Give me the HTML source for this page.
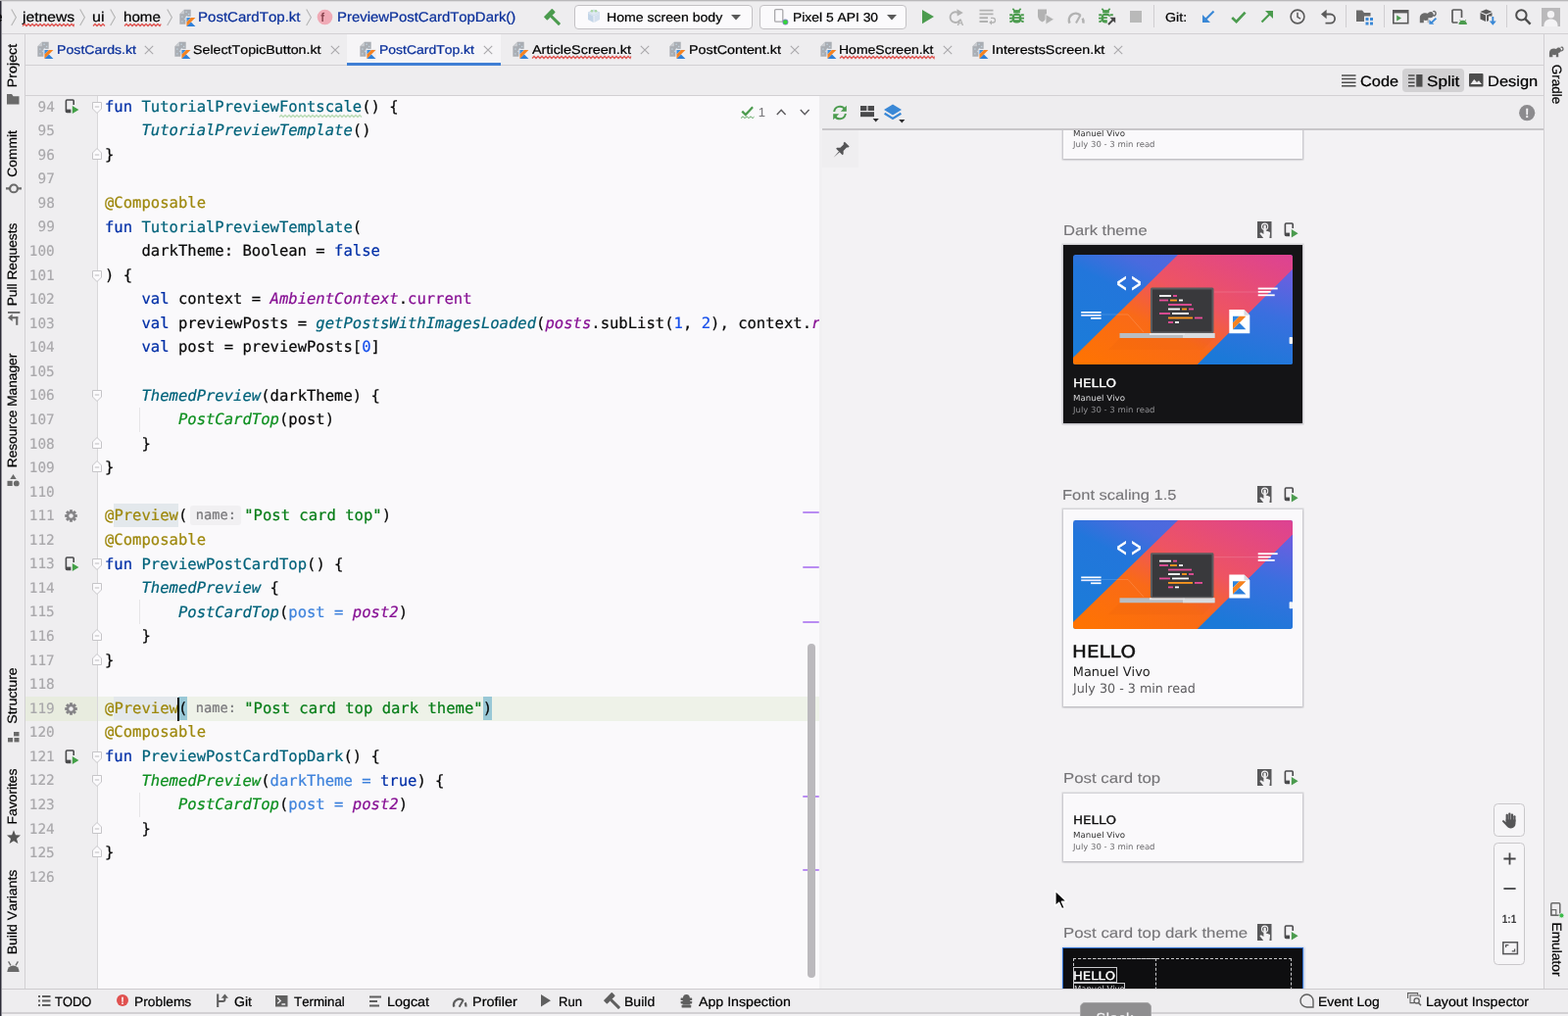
<!DOCTYPE html>
<html lang="en">
<head>
<meta charset="utf-8">
<title>PostCardTop.kt - Android Studio</title>
<style>
html,body{margin:0;padding:0;}
body{width:1600px;height:1037px;overflow:hidden;position:relative;background:#eeedef;
 font-family:"Liberation Sans",Arial,sans-serif;font-size:14px;color:#000;font-kerning:none;
 -webkit-font-smoothing:antialiased;text-rendering:geometricPrecision;}
#root{position:absolute;left:0;top:0;width:1600px;height:1037px;overflow:hidden;will-change:transform;}
.t{position:absolute;white-space:pre;margin:0;padding:0;-webkit-text-stroke:0.22px;}
.b{position:absolute;display:block;overflow:visible;}
.c{position:absolute;white-space:pre;font-family:"DejaVu Sans Mono","Liberation Mono",monospace;font-size:15.55px;line-height:24px;height:24px;color:#080808;left:107px;}
.c{letter-spacing:0.003px;-webkit-text-stroke:0.22px;}
.ln{-webkit-text-stroke:0.15px;}
.c i{font-style:italic;}
.hl{background:#e3e8ec;display:inline-block;height:24px;margin-top:0;vertical-align:top;}
.pm{background:#99c8d6;display:inline-block;height:24px;vertical-align:top;}
.k{color:#002fa7}.f{color:#00627a}.g{color:#0d8f1f}.a{color:#9e880d}.s{color:#067d17}.n{color:#1750eb}.p{color:#871094}.q{color:#3f83dc}
.ln{position:absolute;white-space:pre;font-family:"DejaVu Sans Mono","Liberation Mono",monospace;font-size:14.4px;line-height:24px;height:24px;color:#a9a8ab;width:40px;text-align:right;left:15.8px;}
.h{display:inline-block;font-family:"DejaVu Sans Mono","Liberation Mono",monospace;font-size:13.7px;letter-spacing:0;color:#7b7a7d;background:#f1f0f2;border-radius:3px;vertical-align:top;height:20px;line-height:21.5px;margin-top:2px;}
</style>
</head>
<body>
<div id="root">
<div class="b" style="left:26px;top:98px;width:810px;height:912px;background:#faf9fb;"></div>
<div class="b" style="left:26px;top:98px;width:73px;height:912px;background:#efeef0;"></div>
<div class="b" style="left:99px;top:98px;width:1px;height:912px;background:#d9d8da;"></div>
<div class="b" style="left:839px;top:98px;width:737px;height:912px;background:#f3f2f4;"></div>
<div class="b" style="left:836px;top:98px;width:3px;height:912px;background:#f1f0f2;"></div>
<div class="b" style="left:0px;top:0px;width:1600px;height:1px;background:#b9b8ba;"></div>
<div class="b" style="left:0px;top:1px;width:1600px;height:1px;background:#dddcde;"></div>
<div class="b" style="left:0px;top:34px;width:1600px;height:1px;background:#d2d0d3;"></div>
<div class="b" style="left:26px;top:66px;width:1550px;height:1px;background:#d2d0d3;"></div>
<div class="b" style="left:26px;top:97px;width:1550px;height:1px;background:#d2d0d3;"></div>
<div class="b" style="left:25px;top:35px;width:1px;height:975px;background:#d2d0d3;"></div>
<div class="b" style="left:0px;top:1px;width:1px;height:1036px;background:#2c2b36;"></div>
<div class="b" style="left:1px;top:1px;width:1px;height:1036px;background:#8b8a92;"></div>
<div class="b" style="left:1575px;top:35px;width:1px;height:975px;background:#d2d0d3;"></div>
<div class="b" style="left:0;top:-0.7px;width:1600px;height:36px;">
<div class="t" style="top:9.1px;font-size:14px;line-height:18px;color:#000;left:-5.3px;">e</div>
<svg class="b" style="left:10.5px;top:10.099999999999998px;" width="6" height="18" viewBox="0 0 6 18"><polyline points="0.7,0.6 5.4,8.8 0.7,17" fill="none" stroke="#b4b4b4" stroke-width="1.1"/></svg>
<div class="t" style="top:9.1px;font-size:14px;line-height:18px;color:#000;left:22.5px;transform:scaleX(1.120);transform-origin:0 0;">jetnews</div>
<svg class="b" style="left:23px;top:25.1px;" width="53" height="3" viewBox="0 0 53 3"><path d="M0,2.5 L2.0,0.5 L4.0,2.5 L6.0,0.5 L8.0,2.5 L10.0,0.5 L12.0,2.5 L14.0,0.5 L16.0,2.5 L18.0,0.5 L20.0,2.5 L22.0,0.5 L24.0,2.5 L26.0,0.5 L28.0,2.5 L30.0,0.5 L32.0,2.5 L34.0,0.5 L36.0,2.5 L38.0,0.5 L40.0,2.5 L42.0,0.5 L44.0,2.5 L46.0,0.5 L48.0,2.5 L50.0,0.5 L52.0,2.5 L52.5,0.5" stroke="#e0524f" stroke-width="1.25" fill="none"/></svg>
<svg class="b" style="left:81px;top:10.099999999999998px;" width="6" height="18" viewBox="0 0 6 18"><polyline points="0.7,0.6 5.4,8.8 0.7,17" fill="none" stroke="#b4b4b4" stroke-width="1.1"/></svg>
<div class="t" style="top:9.1px;font-size:14px;line-height:18px;color:#000;left:94.4px;transform:scaleX(1.150);transform-origin:0 0;">ui</div>
<svg class="b" style="left:95px;top:25.1px;" width="13" height="3" viewBox="0 0 13 3"><path d="M0,2.5 L2.0,0.5 L4.0,2.5 L6.0,0.5 L8.0,2.5 L10.0,0.5 L12.0,2.5" stroke="#e0524f" stroke-width="1.25" fill="none"/></svg>
<svg class="b" style="left:112px;top:10.099999999999998px;" width="6" height="18" viewBox="0 0 6 18"><polyline points="0.7,0.6 5.4,8.8 0.7,17" fill="none" stroke="#b4b4b4" stroke-width="1.1"/></svg>
<div class="t" style="top:9.1px;font-size:14px;line-height:18px;color:#000;left:125.9px;transform:scaleX(1.083);transform-origin:0 0;">home</div>
<svg class="b" style="left:126.5px;top:25.1px;" width="38" height="3" viewBox="0 0 38 3"><path d="M0,2.5 L2.0,0.5 L4.0,2.5 L6.0,0.5 L8.0,2.5 L10.0,0.5 L12.0,2.5 L14.0,0.5 L16.0,2.5 L18.0,0.5 L20.0,2.5 L22.0,0.5 L24.0,2.5 L26.0,0.5 L28.0,2.5 L30.0,0.5 L32.0,2.5 L34.0,0.5 L36.0,2.5 L37.3,0.5" stroke="#e0524f" stroke-width="1.25" fill="none"/></svg>
<svg class="b" style="left:170px;top:10.099999999999998px;" width="6" height="18" viewBox="0 0 6 18"><polyline points="0.7,0.6 5.4,8.8 0.7,17" fill="none" stroke="#b4b4b4" stroke-width="1.1"/></svg>
<svg class="b" style="left:183.3px;top:10px;" width="17" height="19" viewBox="0 0 16 18"><path d="M0.3,5 L4.6,0.6 H11 V15 H0.3 Z" fill="#a9adb3"/><path d="M0.3,5 H4.6 V0.6 Z" fill="#c9ccd0"/><g fill="#c3d3e0"><rect x="6" y="2.4" width="1.3" height="1.3"/><rect x="8.4" y="4.6" width="1.3" height="1.3"/><rect x="2" y="7" width="1.3" height="1.3"/><rect x="4.6" y="9.2" width="1.3" height="1.3"/><rect x="2" y="11.6" width="1.3" height="1.3"/><rect x="6.4" y="6.6" width="1.3" height="1.3"/></g><g transform="translate(7,8.5)"><rect x="-1" y="-1" width="10" height="10" fill="#efeef0"/><polygon points="0,0 4.2,0 0,4.2" fill="#3d8fe0"/><polygon points="4.2,0 8.5,0 0,8.5 0,4.2" fill="#f58220"/><polygon points="4.25,4.25 8.5,8.5 0,8.5" fill="#2e7fd8"/></g></svg>
<div class="t" style="top:9.1px;font-size:14px;line-height:18px;color:#0a2f9a;left:201.9px;transform:scaleX(1.075);transform-origin:0 0;">PostCardTop.kt</div>
<svg class="b" style="left:311.5px;top:10.099999999999998px;" width="6" height="18" viewBox="0 0 6 18"><polyline points="0.7,0.6 5.4,8.8 0.7,17" fill="none" stroke="#b4b4b4" stroke-width="1.1"/></svg>
<svg class="b" style="left:322.5px;top:9.5px;" width="17" height="17" viewBox="0 0 17 17"><circle cx="8.5" cy="8.5" r="7.8" fill="#f0aab6"/></svg>
<div class="t" style="top:10.9px;font-size:12.5px;line-height:16px;color:#7a3540;left:327.6px;">f</div>
<div class="t" style="top:9.1px;font-size:14px;line-height:18px;color:#0a2f9a;left:344.1px;transform:scaleX(1.065);transform-origin:0 0;">PreviewPostCardTopDark()</div>
<svg class="b" style="left:554.5px;top:9.6px;" width="18" height="18" viewBox="0 0 18 18"><g transform="rotate(-45 9 9)" fill="#4b9b4e"><rect x="3" y="2" width="12" height="5" rx="0.8"/><rect x="7.5" y="6.6" width="3" height="12.4" rx="0.6"/></g></svg>
<div class="b" style="left:586px;top:5.7px;width:182px;height:25.0px;background:#fbfafc;border:1px solid #c3c1c4;border-radius:4px;box-sizing:border-box;"></div>
<svg class="b" style="left:598.5px;top:10px;" width="14" height="15" viewBox="0 0 14 15"><polygon points="7,1 13,4 7,7 1,4" fill="#dfe9f3" stroke="#bcd0e4" stroke-width="0.6"/><polygon points="1,4.6 6.6,7.6 6.6,14 1,11" fill="#c3d5e8"/><polygon points="13,4.6 7.4,7.6 7.4,14 13,11" fill="#d3e0ee"/><circle cx="5" cy="2.2" r="1.3" fill="#a9d6a6"/><circle cx="9" cy="2.2" r="1.3" fill="#a9d6a6"/></svg>
<div class="t" style="top:9.4px;font-size:12.8px;line-height:17px;color:#000;left:618.8px;transform:scaleX(1.101);transform-origin:0 0;">Home screen body</div>
<svg class="b" style="left:746px;top:15.5px;" width="10" height="6" viewBox="0 0 10 6"><polygon points="0,0 10,0 5,5.6" fill="#595959"/></svg>
<div class="b" style="left:775px;top:5.7px;width:150px;height:25.0px;background:#fbfafc;border:1px solid #c3c1c4;border-radius:4px;box-sizing:border-box;"></div>
<svg class="b" style="left:787px;top:9px;" width="18" height="18" viewBox="0 0 18 18"><rect x="3.6" y="1.6" width="8.2" height="12.6" rx="1.2" fill="none" stroke="#a9a8ab" stroke-width="1.3"/><circle cx="14.4" cy="14.6" r="3" fill="#8b7fd0"/><circle cx="14.4" cy="14.6" r="2.3" fill="#35d43a"/></svg>
<div class="t" style="top:9.4px;font-size:12.8px;line-height:17px;color:#000;left:808.7px;transform:scaleX(1.083);transform-origin:0 0;">Pixel 5 API 30</div>
<svg class="b" style="left:904.8px;top:15.5px;" width="10" height="6" viewBox="0 0 10 6"><polygon points="0,0 10,0 5,5.6" fill="#595959"/></svg>
<svg class="b" style="left:940.5px;top:10.5px;" width="12" height="14.2" viewBox="0 0 12 14.2"><polygon points="0,0 12,7.1 0,14.2" fill="#4b9b4e"/></svg>
<svg class="b" style="left:968px;top:9.5px;" width="16" height="17" viewBox="0 0 16 17"><path d="M10.6,4.6 A5.4,5.4 0 1 0 11.6,11.4" fill="none" stroke="#b2b2b2" stroke-width="1.9"/><polygon points="8.4,0.2 14.8,4 8.8,7.6" fill="#b2b2b2"/><text x="12" y="16.6" text-anchor="middle" font-family="Liberation Sans, Arial, sans-serif" font-size="9.5" font-weight="700" fill="#b2b2b2">A</text></svg>
<svg class="b" style="left:999px;top:9.5px;" width="17" height="17" viewBox="0 0 17 17"><path d="M0.5,1.6 H14.5 M0.5,5.4 H14.5 M0.5,9.2 H9 M0.5,13 H9" stroke="#b2b2b2" stroke-width="1.9" fill="none"/><path d="M12,9.4 H14.2 A2.3,2.3 0 0 1 14.2,14 H12.6" fill="none" stroke="#b2b2b2" stroke-width="1.3"/><polygon points="13,11.6 13,16.4 10.2,14" fill="#b2b2b2"/></svg>
<svg class="b" style="left:1029.5px;top:8.5px;" width="18" height="18" viewBox="0 0 18 18"><path d="M3.4,0.8 L5.8,3.6 M11.6,0.8 L9.2,3.6" stroke="#4b9b4e" stroke-width="1.7" fill="none"/><path d="M4,5.2 A3.5,3.2 0 0 1 11,5.2 Z" fill="#4b9b4e"/><rect x="2.7" y="5.6" width="9.6" height="10" rx="4.2" fill="#4b9b4e"/><path d="M0.2,7.2 H3.4 M11.6,7.2 H14.8 M0,10.6 H3 M12,10.6 H15 M0.4,14.4 L3.4,13.2 M14.6,14.4 L11.6,13.2" stroke="#4b9b4e" stroke-width="1.9" fill="none"/><path d="M5.2,8.7 H9.8 M5.2,11.6 H9.8" stroke="#eeedef" stroke-width="1.3"/></svg>
<svg class="b" style="left:1058px;top:8.5px;" width="18" height="18" viewBox="0 0 18 18"><path d="M1,1.5 H10 V8 C10,11.5 7.5,13.5 5.5,14.5 C3.5,13.5 1,11.5 1,8 Z" fill="#b2b2b2"/><polygon points="9,6.5 17.5,11.7 9,17" fill="#b2b2b2" stroke="#eeedef" stroke-width="0.8"/></svg>
<svg class="b" style="left:1089.5px;top:10.5px;" width="17" height="15" viewBox="0 0 17 15"><path d="M1.6,13.6 A6.8,6.8 0 0 1 12.4,5.6" fill="none" stroke="#b2b2b2" stroke-width="2.5"/><path d="M14.6,8.6 A6.8,6.8 0 0 1 15.3,13.6" fill="none" stroke="#b2b2b2" stroke-width="2.5"/><path d="M8,13.4 L12.6,5.2" stroke="#b2b2b2" stroke-width="2.1" fill="none"/></svg>
<svg class="b" style="left:1121px;top:8.5px;" width="18" height="18" viewBox="0 0 18 18"><path d="M3.4,0.8 L5.8,3.6 M11.6,0.8 L9.2,3.6" stroke="#4b9b4e" stroke-width="1.7" fill="none"/><path d="M4,5.2 A3.5,3.2 0 0 1 11,5.2 Z" fill="#4b9b4e"/><rect x="2.7" y="5.6" width="9.6" height="10" rx="4.2" fill="#4b9b4e"/><path d="M0.2,7.2 H3.4 M11.6,7.2 H14.8 M0,10.6 H3 M12,10.6 H15 M0.4,14.4 L3.4,13.2 M14.6,14.4 L11.6,13.2" stroke="#4b9b4e" stroke-width="1.9" fill="none"/><path d="M5.2,8.7 H9.8 M5.2,11.6 H9.8" stroke="#eeedef" stroke-width="1.3"/><rect x="8.8" y="8.6" width="9" height="9" fill="#eeedef"/><path d="M10,17 L15.6,11.4" stroke="#454545" stroke-width="2" fill="none"/><polygon points="11.4,9.8 17.2,9.8 17.2,15.6" fill="#454545"/></svg>
<svg class="b" style="left:1152.7px;top:11.8px;" width="12" height="12" viewBox="0 0 12 12"><rect x="0" y="0" width="12" height="12" fill="#b9b9b9"/></svg>
<div class="b" style="left:1177px;top:6px;width:1px;height:23px;background:#d0ced1;"></div>
<div class="t" style="top:9.4px;font-size:12.8px;line-height:17px;color:#000;left:1188.7px;transform:scaleX(1.111);transform-origin:0 0;">Git:</div>
<svg class="b" style="left:1226px;top:11px;" width="14" height="14" viewBox="0 0 14 14"><path d="M12.5,1.5 L3,11" stroke="#3a88d6" stroke-width="2.1" fill="none"/><polygon points="1,5 1,13 9,13" fill="#3a88d6"/></svg>
<svg class="b" style="left:1255.5px;top:11.5px;" width="16" height="13" viewBox="0 0 16 13"><path d="M1.2,7 L5.6,11.2 L14.6,1.6" stroke="#4b9b4e" stroke-width="2.6" fill="none"/></svg>
<svg class="b" style="left:1286.3px;top:11px;" width="14" height="14" viewBox="0 0 14 14"><path d="M1.5,12.5 L11,3" stroke="#4b9b4e" stroke-width="2.1" fill="none"/><polygon points="5,1 13,1 13,9" fill="#4b9b4e"/></svg>
<svg class="b" style="left:1315.5px;top:9.5px;" width="16" height="16" viewBox="0 0 16 16"><circle cx="8" cy="8" r="6.9" fill="none" stroke="#5a5a5a" stroke-width="1.6"/><path d="M8,3.8 V8.4 L11,10.2" fill="none" stroke="#5a5a5a" stroke-width="1.5"/></svg>
<svg class="b" style="left:1347.5px;top:9.5px;" width="15" height="16" viewBox="0 0 15 16"><path d="M3,5.5 H9.5 A4.6,4.6 0 0 1 9.5,14.7 H4.5" fill="none" stroke="#5a5a5a" stroke-width="1.8"/><polygon points="0,5.5 5.6,0.8 5.6,10.2" fill="#5a5a5a"/></svg>
<div class="b" style="left:1373px;top:6px;width:1px;height:23px;background:#d0ced1;"></div>
<svg class="b" style="left:1384.3px;top:9.5px;" width="18" height="18" viewBox="0 0 18 18"><path d="M0,1.5 H6 L8,4 H14.5 V13 H0 Z" fill="#6a6a6a"/><rect x="8" y="7.5" width="9.5" height="9.5" fill="#eeedef"/><rect x="9.5" y="9" width="3" height="3" fill="#3a88d6"/><rect x="14" y="9" width="3" height="3" fill="#3a88d6"/><rect x="9.5" y="13.5" width="3" height="3" fill="#3a88d6"/><rect x="14" y="13.5" width="3" height="3" fill="#3a88d6"/></svg>
<div class="b" style="left:1411.5px;top:6px;width:1.0px;height:23px;background:#d0ced1;"></div>
<svg class="b" style="left:1420.5px;top:10.5px;" width="17" height="15" viewBox="0 0 17 15"><rect x="0.8" y="0.8" width="14.9" height="12.9" fill="none" stroke="#5a5a5a" stroke-width="1.6"/><rect x="0.8" y="0.8" width="14.9" height="2.6" fill="#5a5a5a"/><polygon points="4.2,5.6 9,8.6 4.2,11.6" fill="#4b9b4e"/></svg>
<svg class="b" style="left:1448.3px;top:10.5px;" width="18" height="15" viewBox="0 0 18 14.5"><path d="M0.8,13 V8 C0.8,4.6 3.4,3 6.4,3 C7.6,3 8.4,3.2 9,3.6 C9.8,2 11.6,1.2 13.2,2 C14.6,2.8 15,4.4 14.6,5.6 C14.2,7.4 12.8,8.2 11.6,8.2 V13 H8.8 V10.2 C7.6,10.8 6,10.8 4.8,10.2 V13 Z" fill="#6a6a6a"/><path d="M14,5 C15.4,6.6 17.6,5 17,2.8 C16.6,1.4 15.2,0.8 14.4,1.8" fill="none" stroke="#6a6a6a" stroke-width="1.5"/><rect x="9.4" y="8" width="9" height="7" fill="#eeedef"/><path d="M17.4,8.4 L12.2,13.4" stroke="#3a88d6" stroke-width="1.9" fill="none"/><polygon points="10.4,9.8 10.4,14.6 15.4,14.6" fill="#3a88d6"/></svg>
<svg class="b" style="left:1480.5px;top:9.5px;" width="17" height="17" viewBox="0 0 17 17"><rect x="1" y="1" width="9.5" height="13" rx="1" fill="none" stroke="#5a5a5a" stroke-width="1.7"/><rect x="6.5" y="9" width="10" height="8" fill="#eeedef"/><path d="M7.5,16 A4.2,4.2 0 0 1 15.9,16 Z" fill="#4b9b4e"/><path d="M8.6,11.2 L9.8,12.8 M14.8,11.2 L13.6,12.8" stroke="#4b9b4e" stroke-width="0.9"/></svg>
<svg class="b" style="left:1509.5px;top:9.5px;" width="17" height="17" viewBox="0 0 17 17"><polygon points="6.5,0.5 12.5,3 6.5,5.6 0.5,3" fill="#5a5a5a"/><polygon points="0.5,4 6,6.4 6,13 0.5,10.4" fill="#5a5a5a"/><polygon points="12.5,4 7,6.4 7,13 12.5,10.4" fill="#5a5a5a"/><rect x="9" y="7.5" width="8" height="10" fill="#eeedef"/><path d="M13.3,8 V14.5" stroke="#3a88d6" stroke-width="1.9"/><polygon points="9.8,12.6 16.8,12.6 13.3,16.8" fill="#3a88d6"/></svg>
<div class="b" style="left:1537px;top:6px;width:1px;height:23px;background:#d0ced1;"></div>
<svg class="b" style="left:1546px;top:9.5px;" width="17" height="17" viewBox="0 0 17 17"><circle cx="6.4" cy="6.4" r="5.2" fill="none" stroke="#4d4d4d" stroke-width="2"/><path d="M10.2,10.2 L15.6,15.6" stroke="#4d4d4d" stroke-width="2.4"/></svg>
<svg class="b" style="left:1573px;top:8.8px;" width="19" height="19" viewBox="0 0 19 19"><rect x="0" y="0" width="19" height="19" fill="#bab9bb"/><circle cx="9.5" cy="6.8" r="3.7" fill="#f4f3f5"/><path d="M2.4,19 C2.4,13.6 5.4,11.6 9.5,11.6 C13.6,11.6 16.6,13.6 16.6,19 Z" fill="#f4f3f5"/></svg>
</div>
<div class="b" style="left:354px;top:35px;width:157px;height:31px;background:#f6f5f7;"></div>
<div class="b" style="left:354px;top:63.5px;width:157px;height:3.0px;background:#3f7fd4;"></div>
<svg class="b" style="left:38.300000000000004px;top:42px;" width="17" height="19" viewBox="0 0 16 18"><path d="M0.3,5 L4.6,0.6 H11 V15 H0.3 Z" fill="#a9adb3"/><path d="M0.3,5 H4.6 V0.6 Z" fill="#c9ccd0"/><g fill="#c3d3e0"><rect x="6" y="2.4" width="1.3" height="1.3"/><rect x="8.4" y="4.6" width="1.3" height="1.3"/><rect x="2" y="7" width="1.3" height="1.3"/><rect x="4.6" y="9.2" width="1.3" height="1.3"/><rect x="2" y="11.6" width="1.3" height="1.3"/><rect x="6.4" y="6.6" width="1.3" height="1.3"/></g><g transform="translate(7,8.5)"><rect x="-1" y="-1" width="10" height="10" fill="#efeef0"/><polygon points="0,0 4.2,0 0,4.2" fill="#3d8fe0"/><polygon points="4.2,0 8.5,0 0,8.5 0,4.2" fill="#f58220"/><polygon points="4.25,4.25 8.5,8.5 0,8.5" fill="#2e7fd8"/></g></svg>
<div class="t" style="top:43.1px;font-size:12.6px;line-height:16px;color:#0a2f9a;left:58.1px;transform:scaleX(1.124);transform-origin:0 0;">PostCards.kt</div>
<svg class="b" style="left:147.3px;top:45.9px;" width="10" height="10" viewBox="0 0 10 10"><path d="M0.8,0.8 L9.2,9.2 M9.2,0.8 L0.8,9.2" stroke="#a9a8ab" stroke-width="1.1" fill="none"/></svg>
<svg class="b" style="left:177.5px;top:42px;" width="17" height="19" viewBox="0 0 16 18"><path d="M0.3,5 L4.6,0.6 H11 V15 H0.3 Z" fill="#a9adb3"/><path d="M0.3,5 H4.6 V0.6 Z" fill="#c9ccd0"/><g fill="#c3d3e0"><rect x="6" y="2.4" width="1.3" height="1.3"/><rect x="8.4" y="4.6" width="1.3" height="1.3"/><rect x="2" y="7" width="1.3" height="1.3"/><rect x="4.6" y="9.2" width="1.3" height="1.3"/><rect x="2" y="11.6" width="1.3" height="1.3"/><rect x="6.4" y="6.6" width="1.3" height="1.3"/></g><g transform="translate(7,8.5)"><rect x="-1" y="-1" width="10" height="10" fill="#efeef0"/><polygon points="0,0 4.2,0 0,4.2" fill="#3d8fe0"/><polygon points="4.2,0 8.5,0 0,8.5 0,4.2" fill="#f58220"/><polygon points="4.25,4.25 8.5,8.5 0,8.5" fill="#2e7fd8"/></g></svg>
<div class="t" style="top:43.1px;font-size:12.6px;line-height:16px;color:#000;left:197.1px;transform:scaleX(1.130);transform-origin:0 0;">SelectTopicButton.kt</div>
<svg class="b" style="left:337px;top:45.9px;" width="10" height="10" viewBox="0 0 10 10"><path d="M0.8,0.8 L9.2,9.2 M9.2,0.8 L0.8,9.2" stroke="#a9a8ab" stroke-width="1.1" fill="none"/></svg>
<svg class="b" style="left:367.2px;top:42px;" width="17" height="19" viewBox="0 0 16 18"><path d="M0.3,5 L4.6,0.6 H11 V15 H0.3 Z" fill="#a9adb3"/><path d="M0.3,5 H4.6 V0.6 Z" fill="#c9ccd0"/><g fill="#c3d3e0"><rect x="6" y="2.4" width="1.3" height="1.3"/><rect x="8.4" y="4.6" width="1.3" height="1.3"/><rect x="2" y="7" width="1.3" height="1.3"/><rect x="4.6" y="9.2" width="1.3" height="1.3"/><rect x="2" y="11.6" width="1.3" height="1.3"/><rect x="6.4" y="6.6" width="1.3" height="1.3"/></g><g transform="translate(7,8.5)"><rect x="-1" y="-1" width="10" height="10" fill="#efeef0"/><polygon points="0,0 4.2,0 0,4.2" fill="#3d8fe0"/><polygon points="4.2,0 8.5,0 0,8.5 0,4.2" fill="#f58220"/><polygon points="4.25,4.25 8.5,8.5 0,8.5" fill="#2e7fd8"/></g></svg>
<div class="t" style="top:43.1px;font-size:12.6px;line-height:16px;color:#0a2f9a;left:386.7px;transform:scaleX(1.108);transform-origin:0 0;">PostCardTop.kt</div>
<svg class="b" style="left:492.8px;top:45.9px;" width="10" height="10" viewBox="0 0 10 10"><path d="M0.8,0.8 L9.2,9.2 M9.2,0.8 L0.8,9.2" stroke="#a9a8ab" stroke-width="1.1" fill="none"/></svg>
<svg class="b" style="left:522.5px;top:42px;" width="17" height="19" viewBox="0 0 16 18"><path d="M0.3,5 L4.6,0.6 H11 V15 H0.3 Z" fill="#a9adb3"/><path d="M0.3,5 H4.6 V0.6 Z" fill="#c9ccd0"/><g fill="#c3d3e0"><rect x="6" y="2.4" width="1.3" height="1.3"/><rect x="8.4" y="4.6" width="1.3" height="1.3"/><rect x="2" y="7" width="1.3" height="1.3"/><rect x="4.6" y="9.2" width="1.3" height="1.3"/><rect x="2" y="11.6" width="1.3" height="1.3"/><rect x="6.4" y="6.6" width="1.3" height="1.3"/></g><g transform="translate(7,8.5)"><rect x="-1" y="-1" width="10" height="10" fill="#efeef0"/><polygon points="0,0 4.2,0 0,4.2" fill="#3d8fe0"/><polygon points="4.2,0 8.5,0 0,8.5 0,4.2" fill="#f58220"/><polygon points="4.25,4.25 8.5,8.5 0,8.5" fill="#2e7fd8"/></g></svg>
<div class="t" style="top:43.1px;font-size:12.6px;line-height:16px;color:#000;left:542.6px;transform:scaleX(1.145);transform-origin:0 0;">ArticleScreen.kt</div>
<svg class="b" style="left:543.0px;top:56.8px;" width="101" height="3" viewBox="0 0 101 3"><path d="M0,2.5 L2.0,0.5 L4.0,2.5 L6.0,0.5 L8.0,2.5 L10.0,0.5 L12.0,2.5 L14.0,0.5 L16.0,2.5 L18.0,0.5 L20.0,2.5 L22.0,0.5 L24.0,2.5 L26.0,0.5 L28.0,2.5 L30.0,0.5 L32.0,2.5 L34.0,0.5 L36.0,2.5 L38.0,0.5 L40.0,2.5 L42.0,0.5 L44.0,2.5 L46.0,0.5 L48.0,2.5 L50.0,0.5 L52.0,2.5 L54.0,0.5 L56.0,2.5 L58.0,0.5 L60.0,2.5 L62.0,0.5 L64.0,2.5 L66.0,0.5 L68.0,2.5 L70.0,0.5 L72.0,2.5 L74.0,0.5 L76.0,2.5 L78.0,0.5 L80.0,2.5 L82.0,0.5 L84.0,2.5 L86.0,0.5 L88.0,2.5 L90.0,0.5 L92.0,2.5 L94.0,0.5 L96.0,2.5 L98.0,0.5 L100.0,2.5 L100.8,0.5" stroke="#e0524f" stroke-width="1.25" fill="none"/></svg>
<svg class="b" style="left:652.6px;top:45.9px;" width="10" height="10" viewBox="0 0 10 10"><path d="M0.8,0.8 L9.2,9.2 M9.2,0.8 L0.8,9.2" stroke="#a9a8ab" stroke-width="1.1" fill="none"/></svg>
<svg class="b" style="left:683.0px;top:42px;" width="17" height="19" viewBox="0 0 16 18"><path d="M0.3,5 L4.6,0.6 H11 V15 H0.3 Z" fill="#a9adb3"/><path d="M0.3,5 H4.6 V0.6 Z" fill="#c9ccd0"/><g fill="#c3d3e0"><rect x="6" y="2.4" width="1.3" height="1.3"/><rect x="8.4" y="4.6" width="1.3" height="1.3"/><rect x="2" y="7" width="1.3" height="1.3"/><rect x="4.6" y="9.2" width="1.3" height="1.3"/><rect x="2" y="11.6" width="1.3" height="1.3"/><rect x="6.4" y="6.6" width="1.3" height="1.3"/></g><g transform="translate(7,8.5)"><rect x="-1" y="-1" width="10" height="10" fill="#efeef0"/><polygon points="0,0 4.2,0 0,4.2" fill="#3d8fe0"/><polygon points="4.2,0 8.5,0 0,8.5 0,4.2" fill="#f58220"/><polygon points="4.25,4.25 8.5,8.5 0,8.5" fill="#2e7fd8"/></g></svg>
<div class="t" style="top:43.1px;font-size:12.6px;line-height:16px;color:#000;left:703.1px;transform:scaleX(1.137);transform-origin:0 0;">PostContent.kt</div>
<svg class="b" style="left:805.9px;top:45.9px;" width="10" height="10" viewBox="0 0 10 10"><path d="M0.8,0.8 L9.2,9.2 M9.2,0.8 L0.8,9.2" stroke="#a9a8ab" stroke-width="1.1" fill="none"/></svg>
<svg class="b" style="left:836.5px;top:42px;" width="17" height="19" viewBox="0 0 16 18"><path d="M0.3,5 L4.6,0.6 H11 V15 H0.3 Z" fill="#a9adb3"/><path d="M0.3,5 H4.6 V0.6 Z" fill="#c9ccd0"/><g fill="#c3d3e0"><rect x="6" y="2.4" width="1.3" height="1.3"/><rect x="8.4" y="4.6" width="1.3" height="1.3"/><rect x="2" y="7" width="1.3" height="1.3"/><rect x="4.6" y="9.2" width="1.3" height="1.3"/><rect x="2" y="11.6" width="1.3" height="1.3"/><rect x="6.4" y="6.6" width="1.3" height="1.3"/></g><g transform="translate(7,8.5)"><rect x="-1" y="-1" width="10" height="10" fill="#efeef0"/><polygon points="0,0 4.2,0 0,4.2" fill="#3d8fe0"/><polygon points="4.2,0 8.5,0 0,8.5 0,4.2" fill="#f58220"/><polygon points="4.25,4.25 8.5,8.5 0,8.5" fill="#2e7fd8"/></g></svg>
<div class="t" style="top:43.1px;font-size:12.6px;line-height:16px;color:#000;left:856.4px;transform:scaleX(1.112);transform-origin:0 0;">HomeScreen.kt</div>
<svg class="b" style="left:856.7px;top:56.8px;" width="97" height="3" viewBox="0 0 97 3"><path d="M0,2.5 L2.0,0.5 L4.0,2.5 L6.0,0.5 L8.0,2.5 L10.0,0.5 L12.0,2.5 L14.0,0.5 L16.0,2.5 L18.0,0.5 L20.0,2.5 L22.0,0.5 L24.0,2.5 L26.0,0.5 L28.0,2.5 L30.0,0.5 L32.0,2.5 L34.0,0.5 L36.0,2.5 L38.0,0.5 L40.0,2.5 L42.0,0.5 L44.0,2.5 L46.0,0.5 L48.0,2.5 L50.0,0.5 L52.0,2.5 L54.0,0.5 L56.0,2.5 L58.0,0.5 L60.0,2.5 L62.0,0.5 L64.0,2.5 L66.0,0.5 L68.0,2.5 L70.0,0.5 L72.0,2.5 L74.0,0.5 L76.0,2.5 L78.0,0.5 L80.0,2.5 L82.0,0.5 L84.0,2.5 L86.0,0.5 L88.0,2.5 L90.0,0.5 L92.0,2.5 L94.0,0.5 L96.0,2.5 L96.3,0.5" stroke="#e0524f" stroke-width="1.25" fill="none"/></svg>
<svg class="b" style="left:961.8px;top:45.9px;" width="10" height="10" viewBox="0 0 10 10"><path d="M0.8,0.8 L9.2,9.2 M9.2,0.8 L0.8,9.2" stroke="#a9a8ab" stroke-width="1.1" fill="none"/></svg>
<svg class="b" style="left:992.2px;top:42px;" width="17" height="19" viewBox="0 0 16 18"><path d="M0.3,5 L4.6,0.6 H11 V15 H0.3 Z" fill="#a9adb3"/><path d="M0.3,5 H4.6 V0.6 Z" fill="#c9ccd0"/><g fill="#c3d3e0"><rect x="6" y="2.4" width="1.3" height="1.3"/><rect x="8.4" y="4.6" width="1.3" height="1.3"/><rect x="2" y="7" width="1.3" height="1.3"/><rect x="4.6" y="9.2" width="1.3" height="1.3"/><rect x="2" y="11.6" width="1.3" height="1.3"/><rect x="6.4" y="6.6" width="1.3" height="1.3"/></g><g transform="translate(7,8.5)"><rect x="-1" y="-1" width="10" height="10" fill="#efeef0"/><polygon points="0,0 4.2,0 0,4.2" fill="#3d8fe0"/><polygon points="4.2,0 8.5,0 0,8.5 0,4.2" fill="#f58220"/><polygon points="4.25,4.25 8.5,8.5 0,8.5" fill="#2e7fd8"/></g></svg>
<div class="t" style="top:43.1px;font-size:12.6px;line-height:16px;color:#000;left:1011.8px;transform:scaleX(1.136);transform-origin:0 0;">InterestsScreen.kt</div>
<svg class="b" style="left:1136.2px;top:45.9px;" width="10" height="10" viewBox="0 0 10 10"><path d="M0.8,0.8 L9.2,9.2 M9.2,0.8 L0.8,9.2" stroke="#a9a8ab" stroke-width="1.1" fill="none"/></svg>
<svg class="b" style="left:1369px;top:76px;" width="15" height="13" viewBox="0 0 15 13"><path d="M0,1 H14.5 M0,4.6 H14.5 M0,8.2 H14.5 M0,11.8 H14.5" stroke="#4d4d4d" stroke-width="1.5"/></svg>
<div class="t" style="top:74.1px;font-size:15px;line-height:20px;color:#000;left:1387.8px;transform:scaleX(1.089);transform-origin:0 0;">Code</div>
<div class="b" style="left:1431px;top:69.5px;width:63px;height:24.900000000000006px;background:#d2d1d3;border-radius:4px;"></div>
<svg class="b" style="left:1437px;top:76px;" width="15" height="13" viewBox="0 0 15 13"><path d="M0,1 H6.5 M0,4.6 H6.5 M0,8.2 H6.5 M0,11.8 H6.5" stroke="#4d4d4d" stroke-width="1.5"/><rect x="8.2" y="0" width="6.3" height="12.6" fill="#4d4d4d"/></svg>
<div class="t" style="top:74.1px;font-size:15px;line-height:20px;color:#000;left:1455.6px;transform:scaleX(1.139);transform-origin:0 0;">Split</div>
<svg class="b" style="left:1499px;top:75px;" width="15" height="14" viewBox="0 0 15 14"><rect x="0" y="0" width="14.5" height="13.5" rx="1" fill="#4d4d4d"/><polygon points="1.5,11 5.2,6 8,9 10,7.2 13,11" fill="#eeedef"/></svg>
<div class="t" style="top:74.1px;font-size:15px;line-height:20px;color:#000;left:1517.8px;transform:scaleX(1.097);transform-origin:0 0;">Design</div>
<div class="t" style="left:-8.0px;top:58.7px;width:41.7px;height:16px;font-size:13.4px;line-height:16px;color:#000;transform:rotate(-90deg) scaleX(1.064);transform-origin:50% 50%;">Project</div>
<svg class="b" style="left:7.3px;top:96.3px;" width="13" height="11" viewBox="0 0 13 11"><path d="M0,0 H5 L6.6,2.2 H12.5 V10.5 H0 Z" fill="#6a6a6a"/></svg>
<div class="t" style="left:-10.3px;top:149.2px;width:46.1px;height:16px;font-size:13.4px;line-height:16px;color:#000;transform:rotate(-90deg) scaleX(1.031);transform-origin:50% 50%;">Commit</div>
<svg class="b" style="left:5.8px;top:186.4px;" width="16" height="13" viewBox="0 0 16 13"><circle cx="8" cy="6.4" r="3.9" fill="none" stroke="#6a6a6a" stroke-width="2.1"/><path d="M0,6.4 H4 M12,6.4 H16" stroke="#6a6a6a" stroke-width="2.1"/></svg>
<div class="t" style="left:-28.5px;top:261.8px;width:82.6px;height:16px;font-size:13.4px;line-height:16px;color:#000;transform:rotate(-90deg) scaleX(1.024);transform-origin:50% 50%;">Pull Requests</div>
<svg class="b" style="left:8px;top:317.6px;" width="13" height="14" viewBox="0 0 13 14"><rect x="0" y="0" width="12.4" height="1.9" fill="#6a6a6a"/><rect x="8.2" y="5.2" width="2.1" height="8.6" fill="#6a6a6a"/><rect x="3" y="5.2" width="7.3" height="2.1" fill="#6a6a6a"/><polygon points="0,6.2 4.6,2.4 4.6,10" fill="#6a6a6a"/></svg>
<div class="t" style="left:-44.1px;top:411.3px;width:113.9px;height:16px;font-size:13.4px;line-height:16px;color:#000;transform:rotate(-90deg) scaleX(1.023);transform-origin:50% 50%;">Resource Manager</div>
<svg class="b" style="left:7px;top:484px;" width="13" height="13" viewBox="0 0 13 13"><polygon points="3.2,0 6.4,5 0,5" fill="#6a6a6a" transform="translate(3.3,0)"/><rect x="0.5" y="6.8" width="5.2" height="5.2" fill="#6a6a6a"/><circle cx="9.8" cy="9.4" r="2.9" fill="#6a6a6a"/></svg>
<div class="t" style="left:-14.4px;top:702.1px;width:54.3px;height:16px;font-size:13.4px;line-height:16px;color:#000;transform:rotate(-90deg) scaleX(1.056);transform-origin:50% 50%;">Structure</div>
<svg class="b" style="left:7.5px;top:747px;" width="12" height="11" viewBox="0 0 12 11"><rect x="6" y="0" width="5.5" height="4.4" fill="#6a6a6a"/><rect x="0" y="6" width="5" height="4.4" fill="#6a6a6a"/><rect x="6.5" y="6" width="5" height="4.4" fill="#6a6a6a"/></svg>
<div class="t" style="left:-14.7px;top:804.8px;width:55.1px;height:16px;font-size:13.4px;line-height:16px;color:#000;transform:rotate(-90deg) scaleX(1.036);transform-origin:50% 50%;">Favorites</div>
<svg class="b" style="left:6.5px;top:846.5px;" width="14" height="15" viewBox="0 0 14 15"><polygon points="7,0.3 8.9,5.2 14,5.6 10,8.9 11.4,14 7,11.2 2.6,14 4,8.9 0,5.6 5.1,5.2" fill="#555"/></svg>
<div class="t" style="left:-28.5px;top:923.0px;width:82.6px;height:16px;font-size:13.4px;line-height:16px;color:#000;transform:rotate(-90deg) scaleX(1.049);transform-origin:50% 50%;">Build Variants</div>
<svg class="b" style="left:7px;top:980.5px;" width="13" height="11" viewBox="0 0 13 11"><path d="M0.3,11 A6.2,6.6 0 0 1 12.7,11 Z" fill="#6a6a6a"/><path d="M1.6,0.4 L4,4.4 M11.4,0.4 L9,4.4" stroke="#6a6a6a" stroke-width="1.3"/></svg>
<svg class="b" style="left:1580px;top:47px;" width="16" height="12.5" viewBox="0 0 18 14.5"><path d="M0.8,13 V8 C0.8,4.6 3.4,3 6.4,3 C7.6,3 8.4,3.2 9,3.6 C9.8,2 11.6,1.2 13.2,2 C14.6,2.8 15,4.4 14.6,5.6 C14.2,7.4 12.8,8.2 11.6,8.2 V13 H8.8 V10.2 C7.6,10.8 6,10.8 4.8,10.2 V13 Z" fill="#6a6a6a"/><path d="M14,5 C15.4,6.6 17.6,5 17,2.8 C16.6,1.4 15.2,0.8 14.4,1.8" fill="none" stroke="#6a6a6a" stroke-width="1.5"/></svg>
<div class="t" style="left:1568.1px;top:78.2px;width:40.2px;height:16px;font-size:13.4px;line-height:16px;color:#000;transform:rotate(90deg) scaleX(1.004);transform-origin:50% 50%;">Gradle</div>
<svg class="b" style="left:1582.3px;top:921px;" width="15" height="17" viewBox="0 0 15 17"><rect x="0.8" y="0.8" width="9" height="12.4" rx="1.2" fill="none" stroke="#6a6a6a" stroke-width="1.5"/><rect x="0.8" y="7.6" width="5" height="5.6" fill="none" stroke="#6a6a6a" stroke-width="1.2"/><circle cx="11.4" cy="13.4" r="2.5" fill="#3dbb4a" stroke="#eeedef" stroke-width="0.8"/></svg>
<div class="t" style="left:1561.4px;top:960.5px;width:53.6px;height:16px;font-size:13.4px;line-height:16px;color:#000;transform:rotate(90deg) scaleX(1.028);transform-origin:50% 50%;">Emulator</div>
<div class="b" style="left:26px;top:711px;width:73px;height:25px;background:#e8ecdf;"></div>
<div class="b" style="left:100px;top:711px;width:736px;height:25px;background:#eef2e8;"></div>
<div class="b" style="left:0;top:98px;width:836px;height:910px;overflow:hidden;">
<div class="ln" style="top:-0.38px;">94</div>
<div class="ln" style="top:24.18px;">95</div>
<div class="ln" style="top:48.74px;">96</div>
<div class="ln" style="top:73.31px;">97</div>
<div class="ln" style="top:97.87px;">98</div>
<div class="ln" style="top:122.43px;">99</div>
<div class="ln" style="top:147.00px;">100</div>
<div class="ln" style="top:171.56px;">101</div>
<div class="ln" style="top:196.12px;">102</div>
<div class="ln" style="top:220.68px;">103</div>
<div class="ln" style="top:245.25px;">104</div>
<div class="ln" style="top:269.81px;">105</div>
<div class="ln" style="top:294.37px;">106</div>
<div class="ln" style="top:318.93px;">107</div>
<div class="ln" style="top:343.50px;">108</div>
<div class="ln" style="top:368.06px;">109</div>
<div class="ln" style="top:392.62px;">110</div>
<div class="ln" style="top:417.18px;">111</div>
<div class="ln" style="top:441.75px;">112</div>
<div class="ln" style="top:466.31px;">113</div>
<div class="ln" style="top:490.87px;">114</div>
<div class="ln" style="top:515.43px;">115</div>
<div class="ln" style="top:540.00px;">116</div>
<div class="ln" style="top:564.56px;">117</div>
<div class="ln" style="top:589.12px;">118</div>
<div class="ln" style="top:613.68px;">119</div>
<div class="ln" style="top:638.25px;">120</div>
<div class="ln" style="top:662.81px;">121</div>
<div class="ln" style="top:687.37px;">122</div>
<div class="ln" style="top:711.93px;">123</div>
<div class="ln" style="top:736.50px;">124</div>
<div class="ln" style="top:761.06px;">125</div>
<div class="ln" style="top:785.62px;">126</div>
<div class="c" style="top:-1.18px;"><span class="k">fun</span> <span class="f">TutorialPreviewFontscale</span>() {</div>
<div class="c" style="top:23.38px;">    <i class="f">TutorialPreviewTemplate</i>()</div>
<div class="c" style="top:47.94px;">}</div>
<div class="c" style="top:97.07px;"><span class="a">@Composable</span></div>
<div class="c" style="top:121.63px;"><span class="k">fun</span> <span class="f">TutorialPreviewTemplate</span>(</div>
<div class="c" style="top:146.19px;">    darkTheme: Boolean = <span class="k">false</span></div>
<div class="c" style="top:170.76px;">) {</div>
<div class="c" style="top:195.32px;">    <span class="k">val</span> context = <i class="p">AmbientContext</i>.<span class="p">current</span></div>
<div class="c" style="top:219.88px;">    <span class="k">val</span> previewPosts = <i class="f">getPostsWithImagesLoaded</i>(<i class="p">posts</i>.subList(<span class="n">1</span>, <span class="n">2</span>), context.<i class="p">r</i></div>
<div class="c" style="top:244.44px;">    <span class="k">val</span> post = previewPosts[<span class="n">0</span>]</div>
<div class="c" style="top:293.57px;">    <i class="f">ThemedPreview</i>(darkTheme) {</div>
<div class="c" style="top:318.13px;">        <i class="g">PostCardTop</i>(post)</div>
<div class="c" style="top:342.69px;">    }</div>
<div class="c" style="top:367.26px;">}</div>
<div class="c" style="top:416.38px;"><span class="a">@<span class="hl">Preview</span></span>(<span class="h" style="width:52px;margin-left:3px;margin-right:2.9px;text-align:center;">name:</span><span class="s">"Post card top"</span>)</div>
<div class="c" style="top:440.95px;"><span class="a">@Composable</span></div>
<div class="c" style="top:465.51px;"><span class="k">fun</span> <span class="f">PreviewPostCardTop</span>() {</div>
<div class="c" style="top:490.07px;">    <i class="f">ThemedPreview</i> {</div>
<div class="c" style="top:514.63px;">        <i class="f">PostCardTop</i>(<span class="q">post =</span> <i class="p">post2</i>)</div>
<div class="c" style="top:539.20px;">    }</div>
<div class="c" style="top:563.76px;">}</div>
<div class="c" style="top:612.88px;"><span class="a">@<span class="hl">Preview</span></span><span class="pm">(</span><span class="h" style="width:52px;margin-left:3px;margin-right:2.9px;text-align:center;background:none;">name:</span><span class="s">"Post card top dark theme"</span><span class="pm">)</span></div>
<div class="c" style="top:637.45px;"><span class="a">@Composable</span></div>
<div class="c" style="top:662.01px;"><span class="k">fun</span> <span class="f">PreviewPostCardTopDark</span>() {</div>
<div class="c" style="top:686.57px;">    <i class="g">ThemedPreview</i>(<span class="q">darkTheme =</span> <span class="k">true</span>) {</div>
<div class="c" style="top:711.13px;">        <i class="g">PostCardTop</i>(<span class="q">post =</span> <i class="p">post2</i>)</div>
<div class="c" style="top:735.70px;">    }</div>
<div class="c" style="top:760.26px;">}</div>
</div>
<svg class="b" style="left:284.5px;top:116.8px;" width="85" height="3" viewBox="0 0 85 3"><path d="M0,2.5 L2.0,0.5 L4.0,2.5 L6.0,0.5 L8.0,2.5 L10.0,0.5 L12.0,2.5 L14.0,0.5 L16.0,2.5 L18.0,0.5 L20.0,2.5 L22.0,0.5 L24.0,2.5 L26.0,0.5 L28.0,2.5 L30.0,0.5 L32.0,2.5 L34.0,0.5 L36.0,2.5 L38.0,0.5 L40.0,2.5 L42.0,0.5 L44.0,2.5 L46.0,0.5 L48.0,2.5 L50.0,0.5 L52.0,2.5 L54.0,0.5 L56.0,2.5 L58.0,0.5 L60.0,2.5 L62.0,0.5 L64.0,2.5 L66.0,0.5 L68.0,2.5 L70.0,0.5 L72.0,2.5 L74.0,0.5 L76.0,2.5 L78.0,0.5 L80.0,2.5 L82.0,0.5 L84.0,2.5" stroke="#b9dab4" stroke-width="1.25" fill="none"/></svg>
<div class="b" style="left:142px;top:415.6325px;width:1px;height:25.0px;background:#e6e5e7;"></div>
<div class="b" style="left:142px;top:612.1325px;width:1px;height:25.0px;background:#e6e5e7;"></div>
<div class="b" style="left:142px;top:808.6325px;width:1px;height:25.0px;background:#e6e5e7;"></div>
<div class="b" style="left:181.3px;top:712px;width:2.0px;height:23.5px;background:#000;"></div>
<svg class="b" style="left:66.3px;top:101.39999999999999px;" width="15" height="16" viewBox="0 0 15 16"><rect x="1.4" y="1" width="7.8" height="12.4" rx="1" fill="none" stroke="#4a4a4c" stroke-width="1.6"/><rect x="2" y="10.6" width="6.6" height="2.8" fill="#4a4a4c"/><rect x="6.4" y="6" width="8.5" height="10" fill="#efeef0"/><polygon points="7.8,7 14.4,11 7.8,15" fill="#43a047"/></svg>
<svg class="b" style="left:66.3px;top:568.0875000000001px;" width="15" height="16" viewBox="0 0 15 16"><rect x="1.4" y="1" width="7.8" height="12.4" rx="1" fill="none" stroke="#4a4a4c" stroke-width="1.6"/><rect x="2" y="10.6" width="6.6" height="2.8" fill="#4a4a4c"/><rect x="6.4" y="6" width="8.5" height="10" fill="#efeef0"/><polygon points="7.8,7 14.4,11 7.8,15" fill="#43a047"/></svg>
<svg class="b" style="left:66.3px;top:764.5875000000001px;" width="15" height="16" viewBox="0 0 15 16"><rect x="1.4" y="1" width="7.8" height="12.4" rx="1" fill="none" stroke="#4a4a4c" stroke-width="1.6"/><rect x="2" y="10.6" width="6.6" height="2.8" fill="#4a4a4c"/><rect x="6.4" y="6" width="8.5" height="10" fill="#efeef0"/><polygon points="7.8,7 14.4,11 7.8,15" fill="#43a047"/></svg>
<svg class="b" style="left:66.3px;top:520.1625px;" width="13" height="13" viewBox="0 0 13 13"><g transform="translate(6.5,6.5)" fill="#858487"><rect x="-1.5" y="-6.3" width="3" height="3.2" rx="0.4" transform="rotate(0)"/><rect x="-1.5" y="-6.3" width="3" height="3.2" rx="0.4" transform="rotate(45)"/><rect x="-1.5" y="-6.3" width="3" height="3.2" rx="0.4" transform="rotate(90)"/><rect x="-1.5" y="-6.3" width="3" height="3.2" rx="0.4" transform="rotate(135)"/><rect x="-1.5" y="-6.3" width="3" height="3.2" rx="0.4" transform="rotate(180)"/><rect x="-1.5" y="-6.3" width="3" height="3.2" rx="0.4" transform="rotate(225)"/><rect x="-1.5" y="-6.3" width="3" height="3.2" rx="0.4" transform="rotate(270)"/><rect x="-1.5" y="-6.3" width="3" height="3.2" rx="0.4" transform="rotate(315)"/><circle r="4.4"/><circle r="2.2" fill="#efeef0"/></g></svg>
<svg class="b" style="left:66.3px;top:716.6625px;" width="13" height="13" viewBox="0 0 13 13"><g transform="translate(6.5,6.5)" fill="#858487"><rect x="-1.5" y="-6.3" width="3" height="3.2" rx="0.4" transform="rotate(0)"/><rect x="-1.5" y="-6.3" width="3" height="3.2" rx="0.4" transform="rotate(45)"/><rect x="-1.5" y="-6.3" width="3" height="3.2" rx="0.4" transform="rotate(90)"/><rect x="-1.5" y="-6.3" width="3" height="3.2" rx="0.4" transform="rotate(135)"/><rect x="-1.5" y="-6.3" width="3" height="3.2" rx="0.4" transform="rotate(180)"/><rect x="-1.5" y="-6.3" width="3" height="3.2" rx="0.4" transform="rotate(225)"/><rect x="-1.5" y="-6.3" width="3" height="3.2" rx="0.4" transform="rotate(270)"/><rect x="-1.5" y="-6.3" width="3" height="3.2" rx="0.4" transform="rotate(315)"/><circle r="4.4"/><circle r="2.2" fill="#efeef0"/></g></svg>
<svg class="b" style="left:94.3px;top:103.6px;" width="10" height="12" viewBox="0 0 10 12"><path d="M0.5,0.5 H9.5 V7 L5,11.5 L0.5,7 Z" fill="#fbfafc" stroke="#c6c5c8" stroke-width="1"/><path d="M2.8,5 H7.2" stroke="#bdbcbf" stroke-width="1"/></svg>
<svg class="b" style="left:94.3px;top:151.12499999999997px;" width="10" height="12" viewBox="0 0 10 12"><path d="M0.5,11.5 H9.5 V5 L5,0.5 L0.5,5 Z" fill="#fbfafc" stroke="#c6c5c8" stroke-width="1"/><path d="M2.8,7 H7.2" stroke="#bdbcbf" stroke-width="1"/></svg>
<svg class="b" style="left:94.3px;top:275.5375px;" width="10" height="12" viewBox="0 0 10 12"><path d="M0.5,0.5 H9.5 V7 L5,11.5 L0.5,7 Z" fill="#fbfafc" stroke="#c6c5c8" stroke-width="1"/><path d="M2.8,5 H7.2" stroke="#bdbcbf" stroke-width="1"/></svg>
<svg class="b" style="left:94.3px;top:398.35px;" width="10" height="12" viewBox="0 0 10 12"><path d="M0.5,0.5 H9.5 V7 L5,11.5 L0.5,7 Z" fill="#fbfafc" stroke="#c6c5c8" stroke-width="1"/><path d="M2.8,5 H7.2" stroke="#bdbcbf" stroke-width="1"/></svg>
<svg class="b" style="left:94.3px;top:445.875px;" width="10" height="12" viewBox="0 0 10 12"><path d="M0.5,11.5 H9.5 V5 L5,0.5 L0.5,5 Z" fill="#fbfafc" stroke="#c6c5c8" stroke-width="1"/><path d="M2.8,7 H7.2" stroke="#bdbcbf" stroke-width="1"/></svg>
<svg class="b" style="left:94.3px;top:470.4375px;" width="10" height="12" viewBox="0 0 10 12"><path d="M0.5,11.5 H9.5 V5 L5,0.5 L0.5,5 Z" fill="#fbfafc" stroke="#c6c5c8" stroke-width="1"/><path d="M2.8,7 H7.2" stroke="#bdbcbf" stroke-width="1"/></svg>
<svg class="b" style="left:94.3px;top:570.2875px;" width="10" height="12" viewBox="0 0 10 12"><path d="M0.5,0.5 H9.5 V7 L5,11.5 L0.5,7 Z" fill="#fbfafc" stroke="#c6c5c8" stroke-width="1"/><path d="M2.8,5 H7.2" stroke="#bdbcbf" stroke-width="1"/></svg>
<svg class="b" style="left:94.3px;top:594.85px;" width="10" height="12" viewBox="0 0 10 12"><path d="M0.5,0.5 H9.5 V7 L5,11.5 L0.5,7 Z" fill="#fbfafc" stroke="#c6c5c8" stroke-width="1"/><path d="M2.8,5 H7.2" stroke="#bdbcbf" stroke-width="1"/></svg>
<svg class="b" style="left:94.3px;top:642.3750000000001px;" width="10" height="12" viewBox="0 0 10 12"><path d="M0.5,11.5 H9.5 V5 L5,0.5 L0.5,5 Z" fill="#fbfafc" stroke="#c6c5c8" stroke-width="1"/><path d="M2.8,7 H7.2" stroke="#bdbcbf" stroke-width="1"/></svg>
<svg class="b" style="left:94.3px;top:666.9375000000001px;" width="10" height="12" viewBox="0 0 10 12"><path d="M0.5,11.5 H9.5 V5 L5,0.5 L0.5,5 Z" fill="#fbfafc" stroke="#c6c5c8" stroke-width="1"/><path d="M2.8,7 H7.2" stroke="#bdbcbf" stroke-width="1"/></svg>
<svg class="b" style="left:94.3px;top:766.7875px;" width="10" height="12" viewBox="0 0 10 12"><path d="M0.5,0.5 H9.5 V7 L5,11.5 L0.5,7 Z" fill="#fbfafc" stroke="#c6c5c8" stroke-width="1"/><path d="M2.8,5 H7.2" stroke="#bdbcbf" stroke-width="1"/></svg>
<svg class="b" style="left:94.3px;top:791.35px;" width="10" height="12" viewBox="0 0 10 12"><path d="M0.5,0.5 H9.5 V7 L5,11.5 L0.5,7 Z" fill="#fbfafc" stroke="#c6c5c8" stroke-width="1"/><path d="M2.8,5 H7.2" stroke="#bdbcbf" stroke-width="1"/></svg>
<svg class="b" style="left:94.3px;top:838.8750000000001px;" width="10" height="12" viewBox="0 0 10 12"><path d="M0.5,11.5 H9.5 V5 L5,0.5 L0.5,5 Z" fill="#fbfafc" stroke="#c6c5c8" stroke-width="1"/><path d="M2.8,7 H7.2" stroke="#bdbcbf" stroke-width="1"/></svg>
<svg class="b" style="left:94.3px;top:863.4375000000001px;" width="10" height="12" viewBox="0 0 10 12"><path d="M0.5,11.5 H9.5 V5 L5,0.5 L0.5,5 Z" fill="#fbfafc" stroke="#c6c5c8" stroke-width="1"/><path d="M2.8,7 H7.2" stroke="#bdbcbf" stroke-width="1"/></svg>
<svg class="b" style="left:756px;top:108px;" width="13.5" height="10.5" viewBox="0 0 16 13"><path d="M1.2,7 L5.6,11.2 L14.6,1.6" stroke="#4b9b4e" stroke-width="2.8" fill="none"/></svg>
<svg class="b" style="left:756px;top:118.3px;" width="14" height="4" viewBox="0 0 14 4"><path d="M0,2.6 L2,0.8 L4,2.6 L6,0.8 L8,2.6 L10,0.8 L12,2.6 L13.5,1.2" fill="none" stroke="#4b9b4e" stroke-width="0.9"/></svg>
<div class="t" style="top:106.2px;font-size:13px;line-height:17px;color:#77767a;left:773.8px;-webkit-text-stroke:0;">1</div>
<svg class="b" style="left:792px;top:110.5px;" width="11" height="7" viewBox="0 0 11 7"><polyline points="0.8,6 5.2,1.2 9.6,6" fill="none" stroke="#5c5b5e" stroke-width="1.4"/></svg>
<svg class="b" style="left:816.3px;top:111px;" width="11" height="7" viewBox="0 0 11 7"><polyline points="0.8,1 5.2,5.8 9.6,1" fill="none" stroke="#5c5b5e" stroke-width="1.4"/></svg>
<div class="b" style="left:819px;top:522px;width:17px;height:2px;background:#b98cf2;border-radius:1px;"></div>
<div class="b" style="left:819px;top:578.2px;width:17px;height:2.0px;background:#b98cf2;border-radius:1px;"></div>
<div class="b" style="left:819px;top:634.4px;width:17px;height:2.0px;background:#b98cf2;border-radius:1px;"></div>
<div class="b" style="left:819px;top:812.3px;width:17px;height:2.0px;background:#b98cf2;border-radius:1px;"></div>
<div class="b" style="left:819px;top:887.3px;width:17px;height:2.0px;background:#b98cf2;border-radius:1px;"></div>
<div class="b" style="left:824.3px;top:656.5px;width:7.7000000000000455px;height:341.5px;background:#bbb9bd;border-radius:4px;"></div>
<div class="b" style="left:836px;top:98px;width:739px;height:33px;background:#eeedef;"></div>
<div class="b" style="left:839px;top:130.6px;width:736px;height:2.200000000000017px;background:#c8c6c9;"></div>
<svg class="b" style="left:849px;top:107px;" width="16" height="16" viewBox="0 0 16 16"><path d="M2.2,7 A5.9,5.9 0 0 1 13,4.4" fill="none" stroke="#4b9b4e" stroke-width="2"/><polygon points="14.8,0.8 14.8,6.8 8.8,6.8" fill="#4b9b4e"/><path d="M13.8,9 A5.9,5.9 0 0 1 3,11.6" fill="none" stroke="#4b9b4e" stroke-width="2"/><polygon points="1.2,15.2 1.2,9.2 7.2,9.2" fill="#4b9b4e"/></svg>
<svg class="b" style="left:877.7px;top:108px;" width="19" height="17" viewBox="0 0 19 17"><rect x="0" y="0" width="6.4" height="5" fill="#4a4a4c"/><rect x="7.6" y="0" width="6.4" height="5" fill="#4a4a4c"/><rect x="0" y="6.2" width="14" height="5" fill="#4a4a4c"/><polygon points="12.6,13 18.8,13 15.7,16.4" fill="#2b2b2d"/></svg>
<svg class="b" style="left:901.6px;top:105.5px;" width="22" height="20" viewBox="0 0 22 20"><polygon points="9,0.4 18,6 9,11.6 0,6" fill="#3a88d6"/><path d="M0.6,9.8 L9,15 L17.4,9.8" fill="none" stroke="#3a88d6" stroke-width="2.2"/><polygon points="15.2,16 21.4,16 18.3,19.4" fill="#2b2b2d"/></svg>
<svg class="b" style="left:1549.8px;top:106.7px;" width="17" height="17" viewBox="0 0 17 17"><circle cx="8.2" cy="8.2" r="8.1" fill="#8c8b8e"/><text x="8.2" y="13" text-anchor="middle" font-family="Liberation Sans, Arial, sans-serif" font-size="13.5" font-weight="700" fill="#f6f5f7">!</text></svg>
<div class="b" style="left:839px;top:133px;width:37.200000000000045px;height:37.5px;background:#efeef0;"></div>
<svg class="b" style="left:849px;top:143.6px;" width="18" height="18" viewBox="0 0 18 18"><g transform="scale(1.08) rotate(45 8.5 8.5)" fill="#555557"><path d="M5.4,0.5 H11.6 V2 L10.6,3 V7.4 L12.8,9.6 V10.8 H4.2 V9.6 L6.4,7.4 V3 L5.4,2 Z"/><path d="M8,10.8 H9 L8.5,18.4 Z"/></g></svg>
<div class="b" style="left:1070px;top:133px;width:280px;height:50px;overflow:hidden;">
<div class="b" style="left:14.7px;top:-40px;width:244.60000000000002px;height:69px;background:#faf9fb;box-shadow:0 0 0 1.5px rgba(150,148,156,0.30),0 1px 2px rgba(90,90,100,0.28);"></div>
<div class="t" style="top:-2.5px;font-size:8.3px;line-height:11px;color:#333;left:24.8px;transform:scaleX(1.044);transform-origin:0 0;font-family:'DejaVu Sans','Liberation Sans',sans-serif;-webkit-text-stroke:0;">Manuel Vivo</div>
<div class="t" style="top:8.8px;font-size:8.3px;line-height:11px;color:#6d6c6f;left:24.8px;transform:scaleX(1.025);transform-origin:0 0;font-family:'DejaVu Sans','Liberation Sans',sans-serif;-webkit-text-stroke:0;">July 30 - 3 min read</div>
</div>
<div class="t" style="top:226.8px;font-size:14.5px;line-height:19px;color:#757477;left:1084.8px;transform:scaleX(1.142);transform-origin:0 0;-webkit-text-stroke:0.1px;">Dark theme</div>
<svg class="b" style="left:1282.7px;top:225.8px;" width="15" height="17" viewBox="0 0 15 17"><rect x="0" y="0" width="14.5" height="17" fill="#58585a"/><circle cx="7.6" cy="5.2" r="3.1" fill="none" stroke="#f3f2f4" stroke-width="1.1"/><path d="M6.4,4.6 a1.2,1.2 0 0 1 2.4,0 V9.4 L12,10.4 C13,10.8 13.2,11.6 13,12.6 L12.4,17 H6.2 L2.6,12.6 C2.2,11.8 3.2,11 4.2,11.6 L6.4,13 Z" fill="#f3f2f4"/></svg>
<svg class="b" style="left:1309.5px;top:226.5px;" width="15" height="17" viewBox="0 0 15 17"><rect x="1.4" y="1" width="7.8" height="12.4" rx="1" fill="none" stroke="#4a4a4c" stroke-width="1.6"/><rect x="2" y="10.6" width="6.6" height="2.8" fill="#4a4a4c"/><rect x="6" y="6" width="8.5" height="10" fill="#f3f2f4"/><polygon points="7.8,7 14.6,11.2 7.8,15.4" fill="#4b9b4e"/></svg>
<div class="b" style="left:1084.7px;top:249.7px;width:244.5999999999999px;height:182.3px;background:#141416;box-shadow:0 0 0 1.5px rgba(150,148,156,0.30),0 1px 2px rgba(90,90,100,0.28);"></div>
<svg class="b" style="left:1095px;top:260px;" width="224" height="112" viewBox="0 0 224 112" preserveAspectRatio="none"><defs><linearGradient id="bla" x1="0" y1="1" x2="1" y2="0"><stop offset="0" stop-color="#1a7dd8"/><stop offset="0.45" stop-color="#2276db"/><stop offset="0.62" stop-color="#4a6ade"/><stop offset="1" stop-color="#5a66dd"/></linearGradient><linearGradient id="bda" x1="0" y1="1" x2="1" y2="0"><stop offset="0" stop-color="#ff7400"/><stop offset="0.36" stop-color="#f96a18"/><stop offset="0.58" stop-color="#ee5462"/><stop offset="1" stop-color="#dc4294"/></linearGradient><linearGradient id="bra" x1="0.5" y1="1" x2="0.8" y2="0"><stop offset="0" stop-color="#1b79d8"/><stop offset="0.55" stop-color="#3a6fdf"/><stop offset="1" stop-color="#6a5fe0"/></linearGradient><clipPath id="cpa"><rect x="0" y="0" width="224" height="112" rx="2.5"/></clipPath></defs><g clip-path="url(#cpa)"><rect x="0" y="0" width="224" height="112" fill="url(#bla)"/><polygon points="107,0 224,0 224,15 127,112 0,112 0,105" fill="url(#bda)"/><polygon points="224,15 224,112 127,112" fill="url(#bra)"/><polygon points="48,85 144,85 132,97 36,97" fill="#e65f10" opacity="0.15"/><rect x="47.5" y="80" width="97" height="5" fill="#b9bdc2"/><rect x="112" y="80" width="32.5" height="5" fill="#d9dcdf"/><rect x="78" y="80" width="36" height="2" fill="#e3e5e8"/><rect x="79" y="33.5" width="64.5" height="46.5" rx="1.5" fill="#5b5b5e"/><rect x="81" y="35.5" width="60.5" height="43" fill="#39393c"/><rect x="88" y="41.1" width="12" height="1.8" fill="#ffffff"/><rect x="102" y="41.1" width="4" height="1.8" fill="#e84e9a"/><rect x="88" y="45.6" width="9" height="1.8" fill="#e84e9a"/><rect x="99" y="45.6" width="7" height="1.8" fill="#ff9a1f"/><rect x="108" y="45.6" width="4" height="1.8" fill="#ffffff"/><rect x="97" y="50.1" width="24" height="1.8" fill="#e84e9a"/><rect x="97" y="54.6" width="12" height="1.8" fill="#ffffff"/><rect x="111" y="54.6" width="5" height="1.8" fill="#ff9a1f"/><rect x="118" y="54.6" width="5" height="1.8" fill="#e84e9a"/><rect x="88" y="59.1" width="11" height="1.8" fill="#e84e9a"/><rect x="101" y="59.1" width="17" height="1.8" fill="#ffffff"/><rect x="97" y="63.6" width="25" height="1.8" fill="#ff9a1f"/><rect x="124" y="63.6" width="8" height="1.8" fill="#e84e9a"/><rect x="97" y="68.1" width="5" height="1.8" fill="#e84e9a"/><rect x="104" y="68.1" width="4" height="1.8" fill="#ffffff"/><text transform="translate(57,37.6) scale(1,1.42)" x="0" y="0" text-anchor="middle" font-family="Liberation Sans, Arial, sans-serif" font-size="19" fill="#fff" stroke="#fff" stroke-width="0.5" textLength="25" lengthAdjust="spacingAndGlyphs">&lt; &gt;</text><rect x="8.2" y="58" width="20.4" height="1.7" fill="#fff"/><rect x="8.2" y="61" width="20.4" height="1.7" fill="#eef"/><rect x="18" y="64" width="10.6" height="1.7" fill="#fff"/><rect x="188.7" y="33.6" width="20" height="1.8" fill="#fff"/><rect x="188.7" y="37" width="13" height="1.8" fill="#fff"/><rect x="188.7" y="40.4" width="17" height="1.8" fill="#fff"/><path d="M29,61 H56 L72,79" fill="none" stroke="#ffffff" stroke-opacity="0.25" stroke-width="0.6"/><path d="M144,38 H188" fill="none" stroke="#ffffff" stroke-opacity="0.25" stroke-width="0.6"/><path d="M159.3,56 H174.5 L180.3,61.8 V80.3 H159.3 Z" fill="#ffffff"/><path d="M174.5,56 L180.3,61.8 H174.5 Z" fill="#d6d9e0"/><g transform="translate(163,62.8)"><polygon points="0,0 6.7,0 0,6.7" fill="#2f86df"/><polygon points="6.7,0 13.4,0 0,13.4 0,6.7" fill="#f5821f"/><polygon points="6.7,6.7 13.4,13.4 0,13.4" fill="#2c7fdc"/></g><rect x="220.6" y="84" width="3.4" height="7" rx="0.8" fill="#f2f4f8"/></g></svg>
<div class="t" style="top:383.6px;font-size:11.5px;line-height:15px;color:#fff;left:1094.5px;transform:scaleX(1.167);transform-origin:0 0;font-family:'DejaVu Sans','Liberation Sans',sans-serif;-webkit-text-stroke:0.32px;">HELLO</div>
<div class="t" style="top:401.1px;font-size:8.3px;line-height:11px;color:#d6d6d8;left:1094.8px;transform:scaleX(1.044);transform-origin:0 0;font-family:'DejaVu Sans','Liberation Sans',sans-serif;-webkit-text-stroke:0;">Manuel Vivo</div>
<div class="t" style="top:412.7px;font-size:8.3px;line-height:11px;color:#8e8e91;left:1094.8px;transform:scaleX(1.025);transform-origin:0 0;font-family:'DejaVu Sans','Liberation Sans',sans-serif;-webkit-text-stroke:0;">July 30 - 3 min read</div>
<div class="t" style="top:496.8px;font-size:14.5px;line-height:19px;color:#757477;left:1084.4px;transform:scaleX(1.138);transform-origin:0 0;-webkit-text-stroke:0.1px;">Font scaling 1.5</div>
<svg class="b" style="left:1282.7px;top:496.0px;" width="15" height="17" viewBox="0 0 15 17"><rect x="0" y="0" width="14.5" height="17" fill="#58585a"/><circle cx="7.6" cy="5.2" r="3.1" fill="none" stroke="#f3f2f4" stroke-width="1.1"/><path d="M6.4,4.6 a1.2,1.2 0 0 1 2.4,0 V9.4 L12,10.4 C13,10.8 13.2,11.6 13,12.6 L12.4,17 H6.2 L2.6,12.6 C2.2,11.8 3.2,11 4.2,11.6 L6.4,13 Z" fill="#f3f2f4"/></svg>
<svg class="b" style="left:1309.5px;top:496.7px;" width="15" height="17" viewBox="0 0 15 17"><rect x="1.4" y="1" width="7.8" height="12.4" rx="1" fill="none" stroke="#4a4a4c" stroke-width="1.6"/><rect x="2" y="10.6" width="6.6" height="2.8" fill="#4a4a4c"/><rect x="6" y="6" width="8.5" height="10" fill="#f3f2f4"/><polygon points="7.8,7 14.6,11.2 7.8,15.4" fill="#4b9b4e"/></svg>
<div class="b" style="left:1084.7px;top:519.7px;width:244.79999999999995px;height:201.69999999999993px;background:#faf9fb;box-shadow:0 0 0 1.5px rgba(150,148,156,0.30),0 1px 2px rgba(90,90,100,0.28);"></div>
<svg class="b" style="left:1095px;top:531px;" width="224" height="111" viewBox="0 0 224 112" preserveAspectRatio="none"><defs><linearGradient id="blb" x1="0" y1="1" x2="1" y2="0"><stop offset="0" stop-color="#1a7dd8"/><stop offset="0.45" stop-color="#2276db"/><stop offset="0.62" stop-color="#4a6ade"/><stop offset="1" stop-color="#5a66dd"/></linearGradient><linearGradient id="bdb" x1="0" y1="1" x2="1" y2="0"><stop offset="0" stop-color="#ff7400"/><stop offset="0.36" stop-color="#f96a18"/><stop offset="0.58" stop-color="#ee5462"/><stop offset="1" stop-color="#dc4294"/></linearGradient><linearGradient id="brb" x1="0.5" y1="1" x2="0.8" y2="0"><stop offset="0" stop-color="#1b79d8"/><stop offset="0.55" stop-color="#3a6fdf"/><stop offset="1" stop-color="#6a5fe0"/></linearGradient><clipPath id="cpb"><rect x="0" y="0" width="224" height="112" rx="2.5"/></clipPath></defs><g clip-path="url(#cpb)"><rect x="0" y="0" width="224" height="112" fill="url(#blb)"/><polygon points="107,0 224,0 224,15 127,112 0,112 0,105" fill="url(#bdb)"/><polygon points="224,15 224,112 127,112" fill="url(#brb)"/><polygon points="48,85 144,85 132,97 36,97" fill="#e65f10" opacity="0.15"/><rect x="47.5" y="80" width="97" height="5" fill="#b9bdc2"/><rect x="112" y="80" width="32.5" height="5" fill="#d9dcdf"/><rect x="78" y="80" width="36" height="2" fill="#e3e5e8"/><rect x="79" y="33.5" width="64.5" height="46.5" rx="1.5" fill="#5b5b5e"/><rect x="81" y="35.5" width="60.5" height="43" fill="#39393c"/><rect x="88" y="41.1" width="12" height="1.8" fill="#ffffff"/><rect x="102" y="41.1" width="4" height="1.8" fill="#e84e9a"/><rect x="88" y="45.6" width="9" height="1.8" fill="#e84e9a"/><rect x="99" y="45.6" width="7" height="1.8" fill="#ff9a1f"/><rect x="108" y="45.6" width="4" height="1.8" fill="#ffffff"/><rect x="97" y="50.1" width="24" height="1.8" fill="#e84e9a"/><rect x="97" y="54.6" width="12" height="1.8" fill="#ffffff"/><rect x="111" y="54.6" width="5" height="1.8" fill="#ff9a1f"/><rect x="118" y="54.6" width="5" height="1.8" fill="#e84e9a"/><rect x="88" y="59.1" width="11" height="1.8" fill="#e84e9a"/><rect x="101" y="59.1" width="17" height="1.8" fill="#ffffff"/><rect x="97" y="63.6" width="25" height="1.8" fill="#ff9a1f"/><rect x="124" y="63.6" width="8" height="1.8" fill="#e84e9a"/><rect x="97" y="68.1" width="5" height="1.8" fill="#e84e9a"/><rect x="104" y="68.1" width="4" height="1.8" fill="#ffffff"/><text transform="translate(57,37.6) scale(1,1.42)" x="0" y="0" text-anchor="middle" font-family="Liberation Sans, Arial, sans-serif" font-size="19" fill="#fff" stroke="#fff" stroke-width="0.5" textLength="25" lengthAdjust="spacingAndGlyphs">&lt; &gt;</text><rect x="8.2" y="58" width="20.4" height="1.7" fill="#fff"/><rect x="8.2" y="61" width="20.4" height="1.7" fill="#eef"/><rect x="18" y="64" width="10.6" height="1.7" fill="#fff"/><rect x="188.7" y="33.6" width="20" height="1.8" fill="#fff"/><rect x="188.7" y="37" width="13" height="1.8" fill="#fff"/><rect x="188.7" y="40.4" width="17" height="1.8" fill="#fff"/><path d="M29,61 H56 L72,79" fill="none" stroke="#ffffff" stroke-opacity="0.25" stroke-width="0.6"/><path d="M144,38 H188" fill="none" stroke="#ffffff" stroke-opacity="0.25" stroke-width="0.6"/><path d="M159.3,56 H174.5 L180.3,61.8 V80.3 H159.3 Z" fill="#ffffff"/><path d="M174.5,56 L180.3,61.8 H174.5 Z" fill="#d6d9e0"/><g transform="translate(163,62.8)"><polygon points="0,0 6.7,0 0,6.7" fill="#2f86df"/><polygon points="6.7,0 13.4,0 0,13.4 0,6.7" fill="#f5821f"/><polygon points="6.7,6.7 13.4,13.4 0,13.4" fill="#2c7fdc"/></g><rect x="220.6" y="84" width="3.4" height="7" rx="0.8" fill="#f2f4f8"/></g></svg>
<div class="t" style="top:655.0px;font-size:17.2px;line-height:22px;color:#111;left:1094.4px;transform:scaleX(1.152);transform-origin:0 0;font-family:'DejaVu Sans','Liberation Sans',sans-serif;-webkit-text-stroke:0.45px;">HELLO</div>
<div class="t" style="top:678.4px;font-size:12.9px;line-height:17px;color:#222;left:1094.8px;font-family:'DejaVu Sans','Liberation Sans',sans-serif;-webkit-text-stroke:0;">Manuel Vivo</div>
<div class="t" style="top:695.0px;font-size:12.9px;line-height:17px;color:#5d5c5f;left:1094.8px;transform:scaleX(0.987);transform-origin:0 0;font-family:'DejaVu Sans','Liberation Sans',sans-serif;-webkit-text-stroke:0;">July 30 - 3 min read</div>
<div class="t" style="top:785.8px;font-size:14.5px;line-height:19px;color:#757477;left:1084.6px;transform:scaleX(1.161);transform-origin:0 0;-webkit-text-stroke:0.1px;">Post card top</div>
<svg class="b" style="left:1282.7px;top:785.2px;" width="15" height="17" viewBox="0 0 15 17"><rect x="0" y="0" width="14.5" height="17" fill="#58585a"/><circle cx="7.6" cy="5.2" r="3.1" fill="none" stroke="#f3f2f4" stroke-width="1.1"/><path d="M6.4,4.6 a1.2,1.2 0 0 1 2.4,0 V9.4 L12,10.4 C13,10.8 13.2,11.6 13,12.6 L12.4,17 H6.2 L2.6,12.6 C2.2,11.8 3.2,11 4.2,11.6 L6.4,13 Z" fill="#f3f2f4"/></svg>
<svg class="b" style="left:1309.5px;top:785.9000000000001px;" width="15" height="17" viewBox="0 0 15 17"><rect x="1.4" y="1" width="7.8" height="12.4" rx="1" fill="none" stroke="#4a4a4c" stroke-width="1.6"/><rect x="2" y="10.6" width="6.6" height="2.8" fill="#4a4a4c"/><rect x="6" y="6" width="8.5" height="10" fill="#f3f2f4"/><polygon points="7.8,7 14.6,11.2 7.8,15.4" fill="#4b9b4e"/></svg>
<div class="b" style="left:1084.5px;top:809.5px;width:244.79999999999995px;height:69.89999999999998px;background:#faf9fb;box-shadow:0 0 0 1.5px rgba(150,148,156,0.30),0 1px 2px rgba(90,90,100,0.28);"></div>
<div class="t" style="top:830.3px;font-size:11.5px;line-height:15px;color:#111;left:1094.5px;transform:scaleX(1.167);transform-origin:0 0;font-family:'DejaVu Sans','Liberation Sans',sans-serif;-webkit-text-stroke:0.32px;">HELLO</div>
<div class="t" style="top:847.1px;font-size:8.3px;line-height:11px;color:#333;left:1094.8px;transform:scaleX(1.046);transform-origin:0 0;font-family:'DejaVu Sans','Liberation Sans',sans-serif;-webkit-text-stroke:0;">Manuel Vivo</div>
<div class="t" style="top:858.6px;font-size:8.3px;line-height:11px;color:#6d6c6f;left:1094.8px;transform:scaleX(1.025);transform-origin:0 0;font-family:'DejaVu Sans','Liberation Sans',sans-serif;-webkit-text-stroke:0;">July 30 - 3 min read</div>
<div class="t" style="top:943.8px;font-size:14.5px;line-height:19px;color:#757477;left:1084.6px;transform:scaleX(1.162);transform-origin:0 0;-webkit-text-stroke:0.1px;">Post card top dark theme</div>
<svg class="b" style="left:1282.7px;top:943.4px;" width="15" height="17" viewBox="0 0 15 17"><rect x="0" y="0" width="14.5" height="17" fill="#58585a"/><circle cx="7.6" cy="5.2" r="3.1" fill="none" stroke="#f3f2f4" stroke-width="1.1"/><path d="M6.4,4.6 a1.2,1.2 0 0 1 2.4,0 V9.4 L12,10.4 C13,10.8 13.2,11.6 13,12.6 L12.4,17 H6.2 L2.6,12.6 C2.2,11.8 3.2,11 4.2,11.6 L6.4,13 Z" fill="#f3f2f4"/></svg>
<svg class="b" style="left:1309.5px;top:944.1px;" width="15" height="17" viewBox="0 0 15 17"><rect x="1.4" y="1" width="7.8" height="12.4" rx="1" fill="none" stroke="#4a4a4c" stroke-width="1.6"/><rect x="2" y="10.6" width="6.6" height="2.8" fill="#4a4a4c"/><rect x="6" y="6" width="8.5" height="10" fill="#f3f2f4"/><polygon points="7.8,7 14.6,11.2 7.8,15.4" fill="#4b9b4e"/></svg>
<div class="b" style="left:1070px;top:960px;width:280px;height:49px;overflow:hidden;">
<div class="b" style="left:15px;top:8px;width:244px;height:72px;background:#0e0e10;box-shadow:0 0 0 1px #2f6fcf,0 0 2px 1.5px rgba(47,111,207,0.4);"></div>
<div class="b" style="left:24.5px;top:17.5px;width:223.8px;height:62.5px;border:1px dashed #c9c9cc;box-sizing:border-box;"></div>
<div class="b" style="left:24.5px;top:17.5px;width:85.5px;height:62.5px;border:1px dashed #c9c9cc;box-sizing:border-box;"></div>
<div class="b" style="left:24.5px;top:27.3px;width:45.2px;height:15.999999999999996px;border:1px solid #c9c9cc;box-sizing:border-box;"></div>
<div class="b" style="left:24.5px;top:43.3px;width:53.3px;height:16.700000000000003px;border:1px solid #c9c9cc;box-sizing:border-box;"></div>
<div class="t" style="top:28.9px;font-size:11.5px;line-height:15px;color:#fff;left:25.2px;transform:scaleX(1.141);transform-origin:0 0;font-family:'DejaVu Sans','Liberation Sans',sans-serif;-webkit-text-stroke:0.32px;">HELLO</div>
<div class="t" style="top:44.1px;font-size:8.3px;line-height:11px;color:#d6d6d8;left:25.5px;transform:scaleX(1.020);transform-origin:0 0;font-family:'DejaVu Sans','Liberation Sans',sans-serif;-webkit-text-stroke:0;">Manuel Vivo</div>
</div>
<div class="b" style="left:1524.2px;top:819.6px;width:32.200000000000045px;height:34.19999999999993px;background:#f6f5f7;border:1px solid #c9c7ca;border-radius:4.5px;box-sizing:border-box;"></div>
<div class="b" style="left:1524.2px;top:859.8px;width:32.200000000000045px;height:125.40000000000009px;background:#f6f5f7;border:1px solid #c9c7ca;border-radius:4.5px;box-sizing:border-box;"></div>
<svg class="b" style="left:1532px;top:828.5px;" width="17" height="17" viewBox="0 0 17 17"><g fill="#555557"><rect x="4.6" y="1.8" width="2.3" height="8" rx="1.1"/><rect x="7.2" y="0.6" width="2.3" height="9" rx="1.1"/><rect x="9.8" y="1.4" width="2.3" height="8.4" rx="1.1"/><rect x="12.3" y="3.2" width="2.2" height="7" rx="1.1"/><path d="M4.6,7.5 H14.5 V11.5 C14.5,14.6 12.6,16.4 9.8,16.4 C7.6,16.4 6.4,15.6 5.2,14 L1,9.6 C0.4,8.8 1.6,7.6 2.8,8.6 L4.6,10.2 Z"/></g></svg>
<svg class="b" style="left:1533.5px;top:870.2px;" width="13" height="13" viewBox="0 0 13 13"><path d="M6.5,0.4 V12.6 M0.4,6.5 H12.6" stroke="#454547" stroke-width="1.8"/></svg>
<svg class="b" style="left:1533.5px;top:906px;" width="13" height="2" viewBox="0 0 13 2"><path d="M0.4,1 H12.6" stroke="#454547" stroke-width="1.8"/></svg>
<div class="t" style="left:1531.4px;top:929.6px;width:18px;text-align:center;font-size:12px;line-height:16px;font-weight:700;color:#3c3c3e;transform:scaleX(0.84);-webkit-text-stroke:0;">1:1</div>
<svg class="b" style="left:1532.5px;top:961px;" width="17" height="14" viewBox="0 0 17 14"><rect x="0.8" y="0.8" width="14.6" height="11.8" fill="none" stroke="#555557" stroke-width="1.5"/><path d="M3.6,6 V3.6 H6.4 M12.6,7.4 V9.8 H9.8" fill="none" stroke="#555557" stroke-width="1.2"/></svg>
<svg class="b" style="left:1075.4px;top:906.8px;" width="17" height="24" viewBox="0 0 17 24"><path transform="scale(1.15)" d="M1.6,1.6 V15.4 L4.9,12.4 L7.4,18 L9.8,16.9 L7.3,11.5 H11.8 Z" fill="#0a0a0a" stroke="#ffffff" stroke-width="1.3" stroke-linejoin="round"/></svg>
<div class="b" style="left:2px;top:1009px;width:1598px;height:28px;background:#eeedef;"></div>
<div class="b" style="left:2px;top:1009px;width:1598px;height:1px;background:#cdcbce;"></div>
<div class="b" style="left:2px;top:1033.3px;width:1598px;height:1.7000000000000455px;background:#d2d0d3;"></div>
<div class="b" style="left:2px;top:1035px;width:1598px;height:2px;background:#f3f2f4;"></div>
<svg class="b" style="left:38.8px;top:1014.8px;" width="13" height="13" viewBox="0 0 13 13"><path d="M0,2 H2 M0,6.5 H2 M0,11 H2 M4,2 H12.5 M4,6.5 H12.5 M4,11 H12.5" stroke="#5f5f5f" stroke-width="2.1"/></svg>
<div class="t" style="top:1013.5px;font-size:13.5px;line-height:18px;color:#000;left:56.2px;transform:scaleX(0.956);transform-origin:0 0;">TODO</div>
<svg class="b" style="left:118.8px;top:1015.3px;" width="12" height="12" viewBox="0 0 12 12"><circle cx="6" cy="6" r="6" fill="#e0514f"/><text x="6" y="9.7" text-anchor="middle" font-family="Liberation Sans, Arial, sans-serif" font-size="10.5" font-weight="700" fill="#fff">!</text></svg>
<div class="t" style="top:1013.5px;font-size:13.5px;line-height:18px;color:#000;left:136.7px;transform:scaleX(1.022);transform-origin:0 0;">Problems</div>
<svg class="b" style="left:221px;top:1014.3px;" width="12" height="14" viewBox="0 0 12 14"><path d="M1.2,0.5 V14 M1.2,8 H6.4 A2,2 0 0 0 8.4,6 V3.5" fill="none" stroke="#5f5f5f" stroke-width="2.1"/><polygon points="4.8,4.8 8.4,0.4 12,4.8" fill="#5f5f5f"/></svg>
<div class="t" style="top:1013.5px;font-size:13.5px;line-height:18px;color:#000;left:238.8px;transform:scaleX(1.042);transform-origin:0 0;">Git</div>
<svg class="b" style="left:281px;top:1015.8px;" width="13" height="12" viewBox="0 0 13 12"><rect x="0" y="0" width="12.5" height="11.5" fill="#5f5f5f"/><path d="M2.2,2.6 L5.2,5.4 L2.2,8.2 M6.4,9 H10.2" fill="none" stroke="#eeedef" stroke-width="1.3"/></svg>
<div class="t" style="top:1013.5px;font-size:13.5px;line-height:18px;color:#000;left:300.0px;transform:scaleX(0.986);transform-origin:0 0;">Terminal</div>
<svg class="b" style="left:377px;top:1015.8px;" width="12" height="12" viewBox="0 0 12 12"><path d="M0,1.5 H12 M0,6 H8 M0,10.5 H10" stroke="#5f5f5f" stroke-width="2"/></svg>
<div class="t" style="top:1013.5px;font-size:13.5px;line-height:18px;color:#000;left:394.9px;transform:scaleX(1.060);transform-origin:0 0;">Logcat</div>
<svg class="b" style="left:462.3px;top:1015.5px;" width="15" height="13" viewBox="0 0 15 13"><path d="M1.3,11.6 A6,6 0 0 1 10.6,5" fill="none" stroke="#5f5f5f" stroke-width="2.3"/><path d="M12.6,7.4 A6,6 0 0 1 13.3,11.6" fill="none" stroke="#5f5f5f" stroke-width="2.3"/><path d="M6.6,11.8 L10.8,4.6" stroke="#5f5f5f" stroke-width="2"/></svg>
<div class="t" style="top:1013.5px;font-size:13.5px;line-height:18px;color:#000;left:481.7px;transform:scaleX(1.069);transform-origin:0 0;">Profiler</div>
<svg class="b" style="left:552.3px;top:1014.8px;" width="10" height="12.5" viewBox="0 0 10 12.5"><polygon points="0,0 10,6.25 0,12.5" fill="#5f5f5f"/></svg>
<div class="t" style="top:1013.5px;font-size:13.5px;line-height:18px;color:#000;left:569.8px;transform:scaleX(0.969);transform-origin:0 0;">Run</div>
<svg class="b" style="left:615.8px;top:1012.9px;" width="18" height="18" viewBox="0 0 18 18"><g transform="rotate(-45 9 9)" fill="#5f5f5f"><rect x="3" y="2" width="12" height="5" rx="0.8"/><rect x="7.5" y="6.6" width="3" height="12.4" rx="0.6"/></g></svg>
<div class="t" style="top:1013.5px;font-size:13.5px;line-height:18px;color:#000;left:636.8px;transform:scaleX(1.039);transform-origin:0 0;">Build</div>
<svg class="b" style="left:694.3px;top:1013.5px;" width="13" height="15" viewBox="0 0 13 15"><path d="M3,4.6 A3.4,3.6 0 0 1 9.8,4.6 V5.4 H3 Z" fill="#5f5f5f"/><rect x="0.6" y="4.4" width="11.6" height="2.6" rx="0.6" fill="#5f5f5f"/><rect x="2.6" y="6.6" width="7.6" height="5" fill="#5f5f5f"/><rect x="0.6" y="8" width="11.6" height="2.4" rx="0.6" fill="#5f5f5f"/><rect x="1.6" y="11.8" width="9.6" height="2.6" rx="0.5" fill="#5f5f5f"/></svg>
<div class="t" style="top:1013.5px;font-size:13.5px;line-height:18px;color:#000;left:712.9px;transform:scaleX(1.050);transform-origin:0 0;">App Inspection</div>
<svg class="b" style="left:1326px;top:1013.8px;" width="15" height="15" viewBox="0 0 15 15"><path d="M7.5,1 A6.5,6.5 0 1 0 7.5,14 H14 V7.5 A6.5,6.5 0 0 0 7.5,1 Z" fill="none" stroke="#5f5f5f" stroke-width="1.4"/></svg>
<div class="t" style="top:1013.5px;font-size:13.5px;line-height:18px;color:#000;left:1345.4px;transform:scaleX(1.030);transform-origin:0 0;">Event Log</div>
<svg class="b" style="left:1436px;top:1013.3px;" width="15" height="14" viewBox="0 0 15 14"><path d="M0.6,6 V0.6 H10.6 V2.4" fill="none" stroke="#5f5f5f" stroke-width="1.1"/><path d="M7,10.6 H3 V3 H13.4 V5" fill="none" stroke="#5f5f5f" stroke-width="1.1"/><circle cx="9.6" cy="8.4" r="2.6" fill="none" stroke="#5f5f5f" stroke-width="1.3"/><path d="M11.4,10.4 L14,13.2" stroke="#5f5f5f" stroke-width="1.5"/></svg>
<div class="t" style="top:1013.5px;font-size:13.5px;line-height:18px;color:#000;left:1455.3px;transform:scaleX(1.053);transform-origin:0 0;">Layout Inspector</div>
<div class="b" style="left:1102px;top:1023px;width:72.5px;height:24px;background:#8f8e90;border:1px solid #a9a8aa;border-radius:5px;box-sizing:border-box;"></div>
<div class="t" style="left:1118.5px;top:1031.2px;font-size:14.5px;line-height:18px;color:#f4f3f5;letter-spacing:0.6px;">Slack</div>
</div>
</body>
</html>
